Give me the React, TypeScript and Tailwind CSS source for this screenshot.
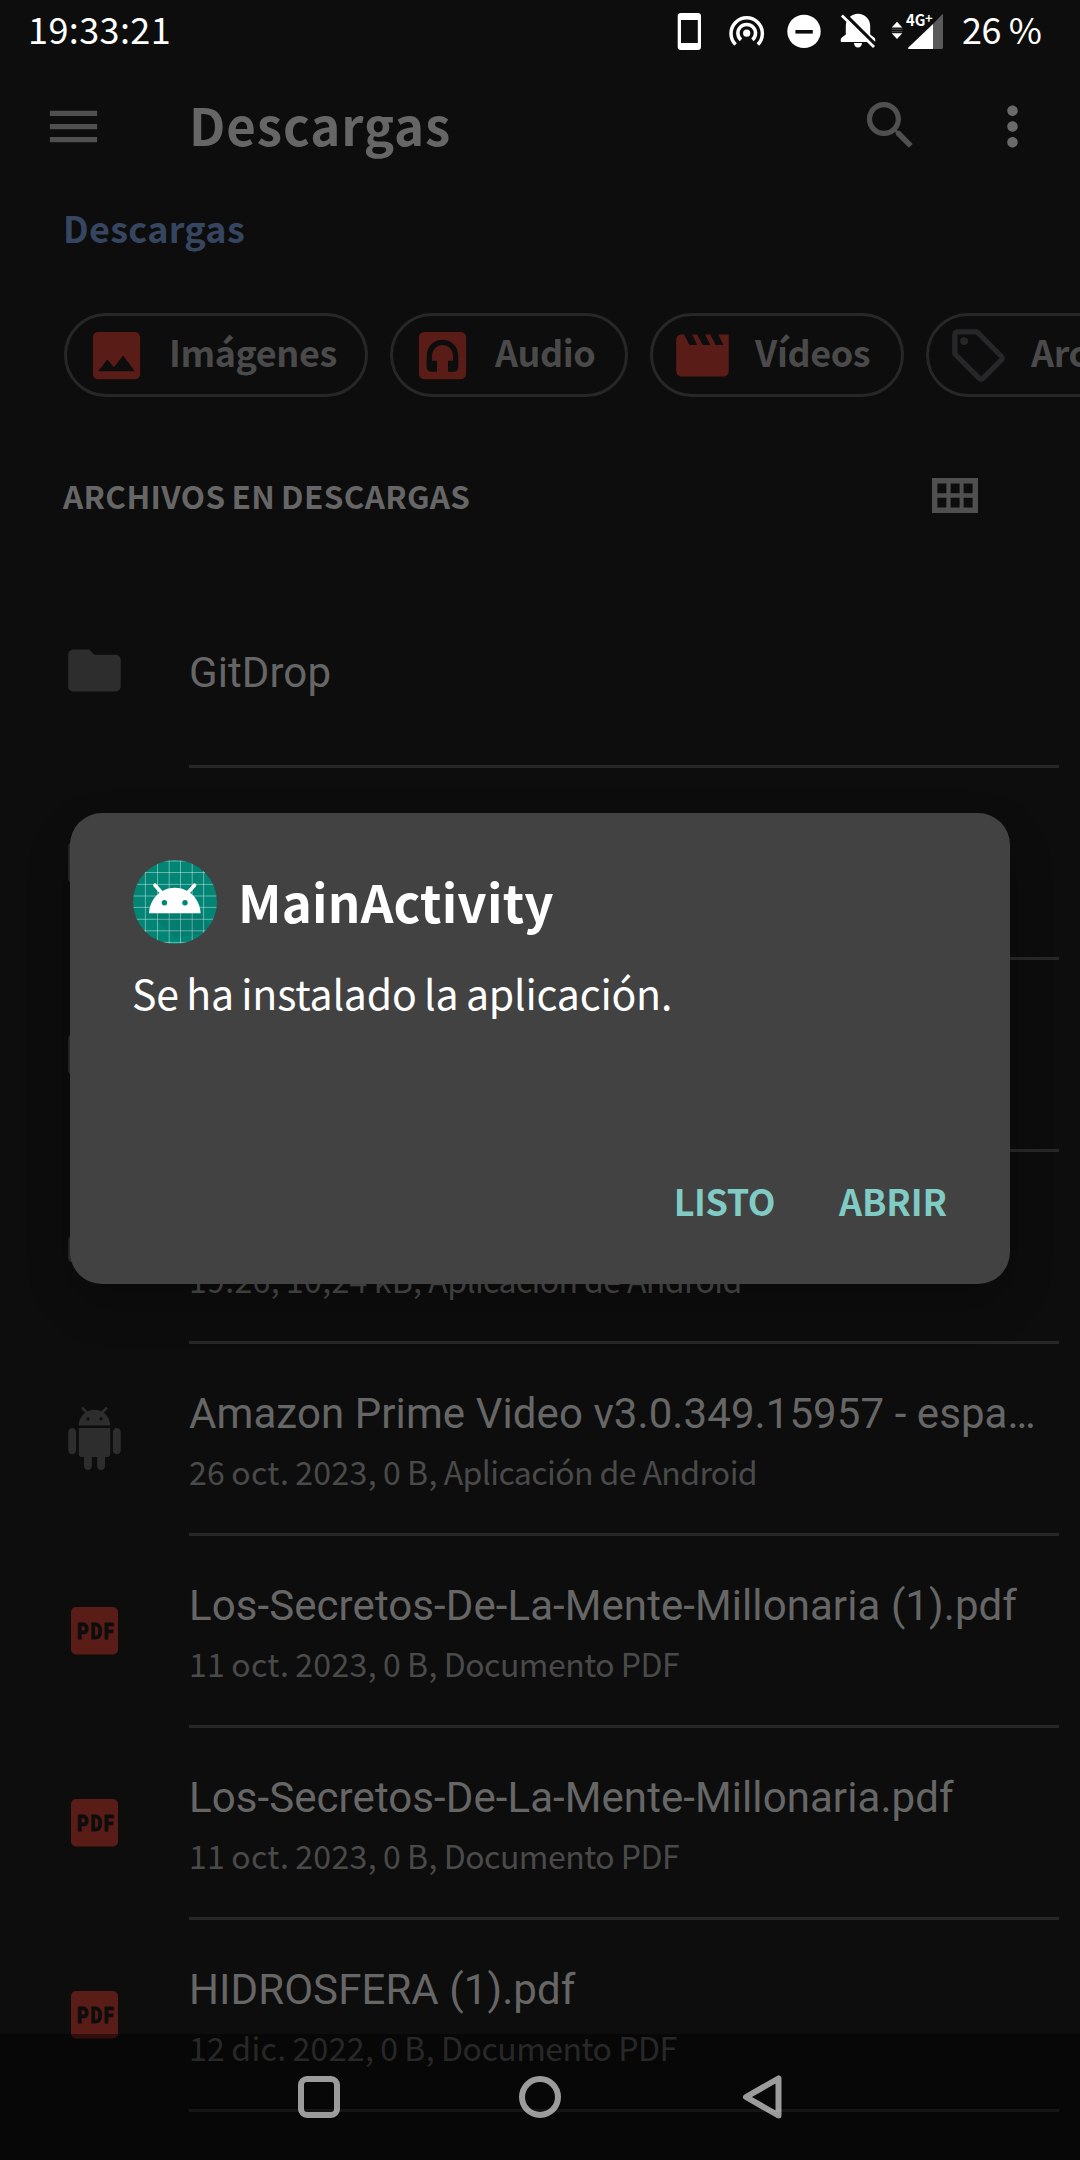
import type { ReactNode } from "react";

const UI = "font-['Noto_Sans_CJK_SC','Noto_Sans',sans-serif]";

const PATHS = {
  menu: "M3 18h18v-2H3v2zm0-5h18v-2H3v2zm0-7v2h18V6H3z",
  search:
    "M15.5 14h-.79l-.28-.27C15.41 12.59 16 11.11 16 9.5 16 5.91 13.09 3 9.5 3S3 5.91 3 9.5 5.91 16 9.5 16c1.61 0 3.09-.59 4.23-1.57l.27.28v.79l5 4.99L20.49 19l-4.99-5zm-6 0C7.01 14 5 11.99 5 9.5S7.01 5 9.5 5 14 7.01 14 9.5 11.99 14 9.5 14z",
  more: "M12 8c1.1 0 2-.9 2-2s-.9-2-2-2-2 .9-2 2 .9 2 2 2zm0 2c-1.1 0-2 .9-2 2s.9 2 2 2 2-.9 2-2-.9-2-2-2zm0 6c-1.1 0-2 .9-2 2s.9 2 2 2 2-.9 2-2-.9-2-2-2z",
  image:
    "M21 19V5c0-1.1-.9-2-2-2H5c-1.1 0-2 .9-2 2v14c0 1.1.9 2 2 2h14c1.1 0 2-.9 2-2zM8.5 13.5l2.5 3.01L14.5 12l4.5 6H5l3.5-4.5z",
  movie:
    "M18 4l2 4h-3l-2-4h-2l2 4h-3l-2-4H8l2 4H7L5 4H4c-1.1 0-1.99.9-1.99 2L2 18c0 1.1.9 2 2 2h16c1.1 0 2-.9 2-2V4h-4z",
  tag: "M21.41 11.58l-9-9C12.05 2.22 11.55 2 11 2H4c-1.1 0-2 .9-2 2v7c0 .55.22 1.05.59 1.42l9 9c.36.36.86.58 1.41.58s1.05-.22 1.41-.59l7-7c.37-.36.59-.86.59-1.41s-.23-1.06-.59-1.42zM13 20.01L4 11V4h7v-.01l9 9-7 7.02zM5 6.5a1.5 1.5 0 1 0 3 0a1.5 1.5 0 1 0-3 0z",
  folder: "M10 4H4c-1.1 0-1.99.9-1.99 2L2 18c0 1.1.9 2 2 2h16c1.1 0 2-.9 2-2V8c0-1.1-.9-2-2-2h-8l-2-2z",
  android:
    "M6 18c0 .55.45 1 1 1h1v3.5c0 .83.67 1.5 1.5 1.5s1.5-.67 1.5-1.5V19h2v3.5c0 .83.67 1.5 1.5 1.5s1.5-.67 1.5-1.5V19h1c.55 0 1-.45 1-1V8H6v10zM3.5 8C2.67 8 2 8.67 2 9.5v7c0 .83.67 1.5 1.5 1.5S5 17.33 5 16.5v-7C5 8.67 4.33 8 3.5 8zm17 0c-.83 0-1.5.67-1.5 1.5v7c0 .83.67 1.5 1.5 1.5s1.5-.67 1.5-1.5v-7c0-.83-.67-1.5-1.5-1.5zm-4.97-5.84l1.3-1.3c.2-.2.2-.51 0-.71-.2-.2-.51-.2-.71 0l-1.48 1.48C13.85 1.23 12.95 1 12 1c-.96 0-1.86.23-2.66.63L7.85.15c-.2-.2-.51-.2-.71 0-.2.2-.2.51 0 .71l1.31 1.31C6.97 3.26 6 5.01 6 7h12c0-1.99-.97-3.75-2.47-4.84zM10 5H9V4h1v1zm5 0h-1V4h1v1z",
};

function Icon({ name, className = "" }: { name: keyof typeof PATHS; className?: string }) {
  return (
    <svg viewBox="0 0 24 24" className={`size-[63px] shrink-0 fill-current ${className}`}>
      <path d={PATHS[name]} />
    </svg>
  );
}

function AudioIcon() {
  return (
    <svg viewBox="0 0 24 24" className="size-[63px] shrink-0 text-[#5a1c17]">
      <rect x="3" y="3" width="18" height="18" rx="2" fill="currentColor" />
      <path d="M7 16v-4a5 5 0 0 1 10 0v4" fill="none" stroke="#0d0d0d" strokeWidth="2" />
      <path d="M6 14h3.9v4.2H7.7A1.7 1.7 0 0 1 6 16.5zM18 14h-3.9v4.2h2.2a1.7 1.7 0 0 0 1.7-1.7z" fill="#0d0d0d" />
    </svg>
  );
}

function PdfIcon() {
  return (
    <svg viewBox="0 0 63 63" className="size-[63px] shrink-0">
      <rect x="8" y="8" width="47" height="47.5" rx="5" fill="#5a1c17" />
      <g transform="translate(14 39.6) scale(0.82 1)">
        <text
          stroke="#0d0d0d"
          strokeWidth="0.8"
          className="fill-[#0d0d0d] font-['Roboto',sans-serif] text-[22px] font-black tracking-[2px]"
        >
          PDF
        </text>
      </g>
    </svg>
  );
}

function GridIcon() {
  return (
    <svg viewBox="0 0 46 35" className="h-[35px] w-[46px] text-[#505050]">
      <path
        fillRule="evenodd"
        fill="currentColor"
        d="M0 0h46v35H0zM5.4 5.5v9.8h9V5.5zM18.6 5.5v9.8h9V5.5zM31.6 5.5v9.8h9V5.5zM5.4 19.8v9.8h9v-9.8zM18.6 19.8v9.8h9v-9.8zM31.6 19.8v9.8h9v-9.8z"
      />
    </svg>
  );
}

function StatusBar() {
  return (
    <header className="flex h-[60px] items-start justify-between pr-[36px] pl-[28px] text-[36px] leading-[57px] text-white">
      <span className="tracking-[0.4px]">19:33:21</span>
      <div className="flex">
        <svg viewBox="0 0 40 60" className="mr-[18.5px] h-[60px] w-[40px]">
          <rect x="8.7" y="13" width="23.3" height="37" rx="3.2" fill="#fff" />
          <rect x="12" y="20" width="16.8" height="23" fill="#0d0d0d" />
        </svg>
        <svg viewBox="0 0 40 60" className="mr-[16.5px] h-[60px] w-[40px]" fill="none" stroke="#fff" strokeWidth="3.5">
          <circle cx="19.7" cy="33.2" r="3.6" fill="#fff" stroke="none" />
          <path d="M14 39.9A8.8 8.8 0 1 1 25.4 39.9" />
          <path d="M8.6 44.6A15.7 15.7 0 1 1 30.8 44.6" />
        </svg>
        <svg viewBox="0 0 40 60" className="mr-[14.5px] h-[60px] w-[40px]">
          <circle cx="20" cy="31.4" r="16.7" fill="#fff" />
          <rect x="11.4" y="30" width="17.4" height="3.6" fill="#0d0d0d" />
        </svg>
        <svg viewBox="0 0 40 60" className="mr-[10px] h-[60px] w-[40px]">
          <path
            fill="#fff"
            d="M20 13.8c-6.5 0-12.2 5-12.2 12.4v8.3L3.9 37.4c-.9.8-1.2 1.6-1.2 2.6V41c0 .6.3.9.9.9h32.8c.6 0 .9-.3.9-.9v-1c0-1-.3-1.8-1.2-2.6l-3.9-2.9v-8.3C32.2 18.8 26.5 13.8 20 13.8zM16 43h8c0 2.6-1.7 4.6-4 4.6s-4-2-4-4.6z"
          />
          <path d="M2 9.5L40 47.2" stroke="#0d0d0d" strokeWidth="3.6" />
          <path d="M3.9 15.4L36 46.9" stroke="#fff" strokeWidth="2.8" />
        </svg>
        <svg viewBox="0 0 56 60" className="mr-[18px] h-[60px] w-[56px]">
          <path d="M9 21.8l5.3 5.8H3.7zM9 39l5.3-5.8H3.7z" fill="#fff" />
          <path d="M3.500 29.3h11M3.500 31.7h11" stroke="#606060" strokeWidth="0.8" />
          <path d="M45 24L54 14.4c.6-.5 1-.3 1 .4V47.6c0 .9-.5 1.4-1.4 1.4H45z" fill="#5a5a5a" />
          <path d="M45 24v25H21c-1 0-1.3-.8-.6-1.5z" fill="#fff" />
          <text x="18" y="25.7" textLength="19.5" lengthAdjust="spacingAndGlyphs" className="fill-white text-[15.5px] font-bold">
            4G
          </text>
          <text x="37" y="22.5" className="fill-white text-[13px] font-bold">
            +
          </text>
        </svg>
        <span className="w-[82px] tracking-[-0.4px] whitespace-nowrap">26 %</span>
      </div>
    </header>
  );
}

function AppBar() {
  return (
    <div className="flex h-[127px] items-center pr-[36px] pl-[42px]">
      <Icon name="menu" className="mt-[6px] text-[#505050]" />
      <h1 className="mt-px ml-[84px] flex-1 text-[51px] leading-[128px] font-bold tracking-[0.9px] text-[#666]">Descargas</h1>
      <Icon name="search" className="mt-[4px] mr-[59px] text-[#505050]" />
      <Icon name="more" className="mt-[6px] text-[#6a6a6a]" />
    </div>
  );
}

function Chip({ icon, label, className }: { icon: ReactNode; label: string; className: string }) {
  return (
    <div className={`flex h-[84px] shrink-0 items-center gap-[21px] rounded-full border-[3px] border-[#262728] pl-[18px] ${className}`}>
      {icon}
      <span className="-mt-[8px] text-[36px] leading-[60px] font-bold tracking-[-0.45px] text-[#4a4a4a]">{label}</span>
    </div>
  );
}

interface FileRow {
  icon: "folder" | "android" | "pdf";
  title?: string;
  meta?: string;
}

const FILES: FileRow[] = [
  { icon: "folder", title: "GitDrop" },
  { icon: "folder" },
  { icon: "folder" },
  { icon: "android", meta: "19:26, 10,24 kB, " },
  { icon: "android", title: "Amazon Prime Video v3.0.349.15957 - espa…", meta: "26 oct. 2023, 0 B, " },
  { icon: "pdf", title: "Los-Secretos-De-La-Mente-Millonaria (1).pdf", meta: "11 oct. 2023, 0 B, " },
  { icon: "pdf", title: "Los-Secretos-De-La-Mente-Millonaria.pdf", meta: "11 oct. 2023, 0 B, " },
  { icon: "pdf", title: "HIDROSFERA (1).pdf", meta: "12 dic. 2022, 0 B, " },
];

function Row({ icon, title, meta }: FileRow) {
  return (
    <li className="flex h-[192px] pr-[21px] pl-[63px]">
      <div className="mt-[63px] mr-[63px] size-[63px] text-[#2d2d2d]">
        {icon === "pdf" ? <PdfIcon /> : <Icon name={icon} />}
      </div>
      <div className={`flex-1 border-b-[3px] border-[#262728] ${meta ? "pt-[45px]" : "pt-[72px]"}`}>
        <p className="h-[50px] font-['Roboto',sans-serif] text-[42px] leading-[50px] tracking-[0.08px] whitespace-nowrap text-[#666]">
          {title}
        </p>
        {meta && (
          <p className="mt-[8px] text-[32px] leading-[48px] whitespace-pre text-[#4a4a4a]">
            <span className="tracking-[0.35px] [word-spacing:-1.5px]">{meta}</span>
            {icon === "pdf" ? (
              <span className="tracking-[-0.5px]">Documento PDF</span>
            ) : (
              <span className="tracking-[-0.6px]">Aplicación de Android</span>
            )}
          </p>
        )}
      </div>
    </li>
  );
}

const GRID_X = [12.4, 24.5, 36.2, 47.5, 59.2, 70.6];
const GRID_Y = [1, 12.5, 24.4, 36, 47.4, 59.3, 70.8, 82.4];

function LauncherIcon() {
  return (
    <svg viewBox="0 0 84 84" className="size-[84px] shrink-0">
      <clipPath id="disc">
        <circle cx="42" cy="42" r="42" />
      </clipPath>
      <g clipPath="url(#disc)">
        <rect width="84" height="84" fill="#038576" />
        <g stroke="#fff" strokeOpacity="0.4" strokeWidth="1">
          {GRID_X.map((x) => (
            <path key={x} d={`M${x} 0V84`} />
          ))}
          {GRID_Y.map((y) => (
            <path key={y} d={`M0 ${y}H84`} />
          ))}
        </g>
        <path d="M17 53.5L42 78L84 72L67 53.5z" fill="#000" fillOpacity="0.06" />
      </g>
      <path d="M16 53.3C16.6 38.8 28 27.8 41.8 27.8S67 38.8 67.6 53.3z" fill="#fff" />
      <path d="M22 25.2L28.5 32.5M61.5 25.2L55 32.5" stroke="#fff" strokeWidth="3.6" strokeLinecap="round" />
      <circle cx="31.4" cy="42.7" r="2.7" fill="#038576" />
      <circle cx="52" cy="42.7" r="2.7" fill="#038576" />
    </svg>
  );
}

function InstallDialog() {
  return (
    <div
      role="dialog"
      className="absolute top-[813px] left-[70px] flex h-[471px] w-[940px] flex-col rounded-[32px] bg-[#424242] px-[63px] pt-[47px] pb-[54px] shadow-[0_20px_44px_rgba(0,0,0,0.22)]"
    >
      <div className="flex items-center gap-[21px]">
        <LauncherIcon />
        <h2 className="-mt-px text-[51px] leading-[79px] font-bold tracking-[0.2px] text-white">MainActivity</h2>
      </div>
      <p className="mt-[18px] -ml-px text-[41px] leading-[60px] tracking-[-0.2px] text-white [word-spacing:-1.5px]">
        Se ha instalado la aplicación.
      </p>
      <div className="mt-auto flex justify-end gap-[64px] text-[36px] leading-[60px] font-bold text-[#80cbc4]">
        <button className="tracking-[-0.45px]">LISTO</button>
        <button className="tracking-[-0.1px]">ABRIR</button>
      </div>
    </div>
  );
}

function NavBar() {
  return (
    <nav className="absolute inset-x-0 bottom-0 flex h-[126px] items-center justify-center gap-[179px] bg-black/45">
      <div className="size-[42px] rounded-[9px] border-[6px] border-white/60" />
      <div className="size-[42px] rounded-full border-[6px] border-white/60" />
      <svg viewBox="0 0 42 42" className="size-[42px] overflow-visible">
        <path d="M38.5 2.5V39.5L6 21z" fill="none" stroke="#fff" strokeOpacity="0.6" strokeWidth="6" strokeLinejoin="round" />
      </svg>
    </nav>
  );
}

export default function App() {
  return (
    <div className={`relative h-[2160px] w-[1080px] overflow-hidden bg-[#0d0d0d] ${UI}`}>
      <StatusBar />
      <AppBar />
      <p className="h-[126px] pl-[63px] text-[36px] leading-[81px] font-bold tracking-[0.3px] text-[#364660]">Descargas</p>
      <div className="flex gap-[22px] overflow-hidden pl-[64px]">
        <Chip icon={<Icon name="image" className="text-[#5a1c17]" />} label="Imágenes" className="w-[304px]" />
        <Chip icon={<AudioIcon />} label="Audio" className="w-[238px]" />
        <Chip icon={<Icon name="movie" className="text-[#5a1c17]" />} label="Vídeos" className="w-[254px]" />
        <Chip icon={<Icon name="tag" className="text-[#262728]" />} label="Archivos" className="w-[304px]" />
      </div>
      <div className="mt-[58px] mb-[41px] flex h-[80px] items-center justify-between pr-[102px] pl-[63px]">
        <h2 className="text-[31.5px] leading-[80px] font-bold tracking-[0.35px] text-[#666] [word-spacing:-1.5px]">
          ARCHIVOS EN DESCARGAS
        </h2>
        <GridIcon />
      </div>
      <ul>
        {FILES.map((file, i) => (
          <Row key={i} {...file} />
        ))}
      </ul>
      <InstallDialog />
      <NavBar />
    </div>
  );
}
